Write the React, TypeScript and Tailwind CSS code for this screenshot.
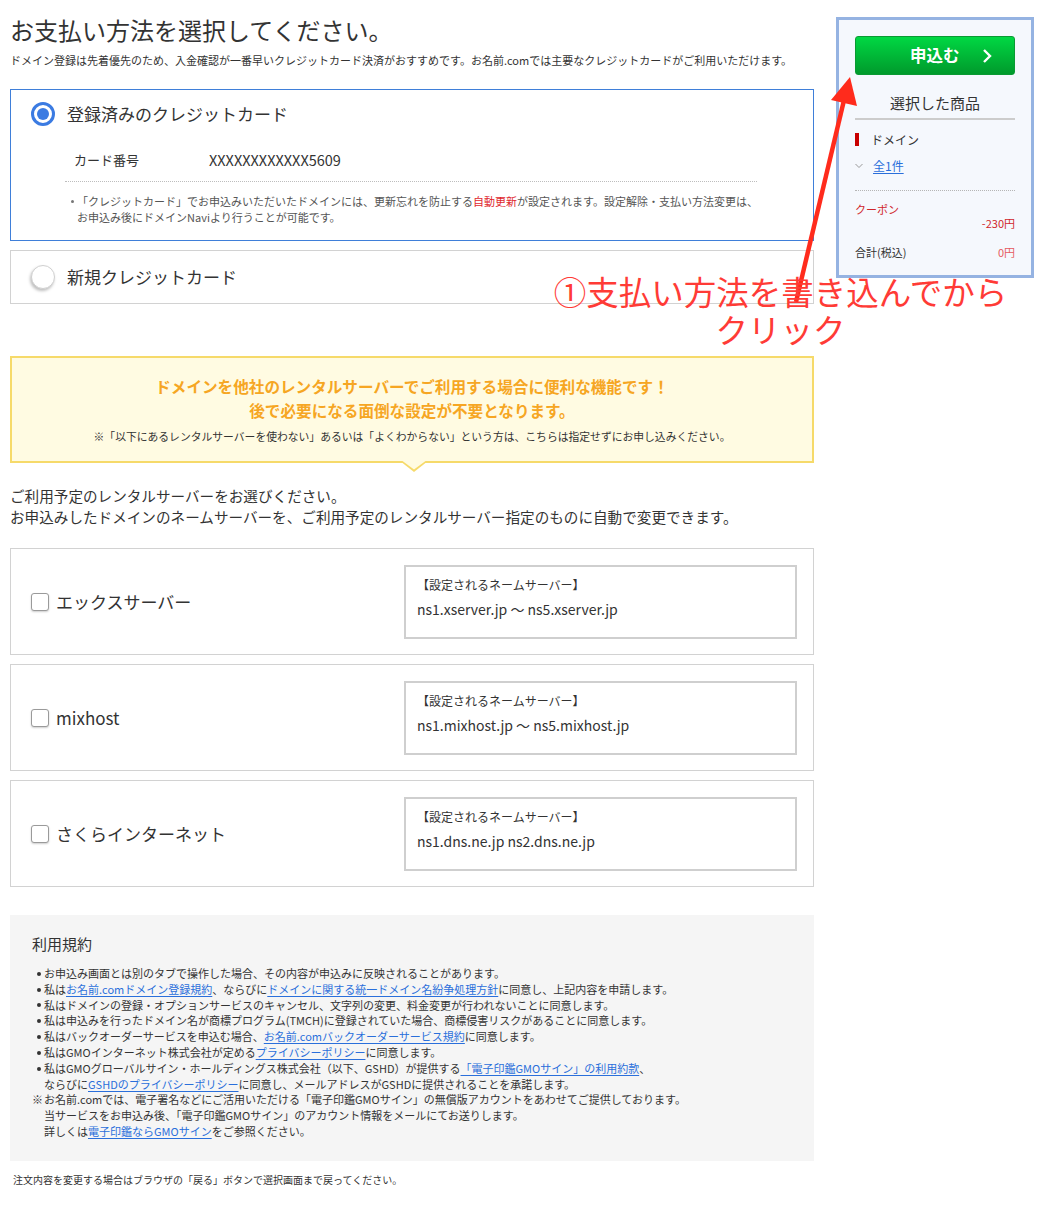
import React from 'react';

// 支払い方法選択画面
const Dot = () => (
  <span className="flex w-[7px] shrink-0 h-[15.8px] items-center">
    <span className="block w-[4px] h-[4px] rounded-full bg-[#333]" />
  </span>
);

const Link = ({ children }: { children: React.ReactNode }) => (
  <span className="text-[#2a6fdb] underline underline-offset-2">{children}</span>
);

const servers = [
  { name: 'エックスサーバー', ns: 'ns1.xserver.jp 〜 ns5.xserver.jp' },
  { name: 'mixhost', ns: 'ns1.mixhost.jp 〜 ns5.mixhost.jp' },
  { name: 'さくらインターネット', ns: 'ns1.dns.ne.jp ns2.dns.ne.jp' },
];

const ServerRow = ({ name, ns }: { name: string; ns: string }) => (
  <div className="flex h-[107px] items-center border border-[#d2d2d2] bg-white">
    <div className="ml-[20px] flex items-center">
      <span className="block w-[18px] h-[18px] rounded-[3px] border border-[#9a9a9a] bg-white shadow-[0_1px_2px_rgba(0,0,0,0.2)]" />
      <span className="ml-[7px] text-[17px] leading-[20px] text-[#333]">{name}</span>
    </div>
    <div className="ml-auto mr-[16px] w-[393px] h-[74px] border-2 border-[#cfcfcf] pl-[11px] pt-[10px]">
      <div className="text-[12px] leading-[16px] text-[#333]">【設定されるネームサーバー】</div>
      <div className="mt-[7px] text-[14px] leading-[18px] text-[#333]">{ns}</div>
    </div>
  </div>
);

const terms: React.ReactNode[] = [
  <>お申込み画面とは別のタブで操作した場合、その内容が申込みに反映されることがあります。</>,
  <>私は<Link>お名前.comドメイン登録規約</Link>、ならびに<Link>ドメインに関する統一ドメイン名紛争処理方針</Link>に同意し、上記内容を申請します。</>,
  <>私はドメインの登録・オプションサービスのキャンセル、文字列の変更、料金変更が行われないことに同意します。</>,
  <>私は申込みを行ったドメイン名が商標プログラム(TMCH)に登録されていた場合、商標侵害リスクがあることに同意します。</>,
  <>私はバックオーダーサービスを申込む場合、<Link>お名前.comバックオーダーサービス規約</Link>に同意します。</>,
  <>私はGMOインターネット株式会社が定める<Link>プライバシーポリシー</Link>に同意します。</>,
  <>私はGMOグローバルサイン・ホールディングス株式会社（以下、GSHD）が提供する<Link>「電子印鑑GMOサイン」の利用約款</Link>、<br />ならびに<Link>GSHDのプライバシーポリシー</Link>に同意し、メールアドレスがGSHDに提供されることを承諾します。</>,
];

export default function App() {
  return (
    <div className="relative w-[1044px] min-h-[1206px] bg-white text-[#333] font-['Noto_Sans_CJK_JP','Noto_Sans',sans-serif]">
      <div className="flex">
        <main className="ml-[10px] w-[804px]">
          <h1 className="mt-[18px] text-[24px] leading-[24px] font-normal text-[#333]">お支払い方法を選択してください。</h1>
          <p className="mt-[12px] text-[11px] leading-[12px] whitespace-nowrap">
            ドメイン登録は先着優先のため、入金確認が一番早いクレジットカード決済がおすすめです。お名前.comでは主要なクレジットカードがご利用いただけます。
          </p>

          {/* 登録済みカード */}
          <div className="mt-[23px] border border-[#3f7fd9] pt-[12px] pb-[15px]">
            <div className="flex h-[24px] items-center pl-[20px]">
              <span className="flex w-[24px] h-[24px] items-center justify-center rounded-full border-[3px] border-[#3b7be2] bg-white">
                <span className="block w-[12px] h-[12px] rounded-full bg-[#3b7be2]" />
              </span>
              <span className="ml-[12px] text-[17px] leading-[20px]">登録済みのクレジットカード</span>
            </div>
            <div className="mt-[24px] flex h-[20px] items-center pl-[63px]">
              <span className="w-[135px] text-[13px]">カード番号</span>
              <span className="text-[14.5px]">XXXXXXXXXXXX5609</span>
            </div>
            <div className="mt-[11px] ml-[54px] w-[692px] border-t border-dotted border-[#bdbdbd]" />
            <div className="mt-[11px] ml-[60px] flex text-[11px] leading-[16px] text-[#555] whitespace-nowrap">
              <span className="flex w-[6px] h-[16px] items-center">
                <span className="block w-[3px] h-[3px] rounded-full bg-[#777]" />
              </span>
              <span>
                「クレジットカード」でお申込みいただいたドメインには、更新忘れを防止する<span className="text-[#e0282e]">自動更新</span>が設定されます。設定解除・支払い方法変更は、
                <br />
                お申込み後にドメインNaviより行うことが可能です。
              </span>
            </div>
          </div>

          {/* 新規カード */}
          <div className="mt-[9px] flex h-[54px] items-center border border-[#d2d2d2] pl-[20px]">
            <span className="block w-[24px] h-[24px] rounded-full border border-[#d0d0d0] bg-white shadow-[-1px_2px_3px_rgba(0,0,0,0.25)]" />
            <span className="ml-[12px] text-[17px] leading-[20px]">新規クレジットカード</span>
          </div>

          {/* レンタルサーバー案内 */}
          <div className="relative mt-[52px] h-[107px] border-2 border-[#f6da6a] bg-[#fffbe2] pt-[16px] text-center">
            <div className="text-[15.6px] leading-[24px] font-bold text-[#f6a623]">ドメインを他社のレンタルサーバーでご利用する場合に便利な機能です！</div>
            <div className="text-[15.6px] leading-[24px] font-bold text-[#f6a623]">後で必要になる面倒な設定が不要となります。</div>
            <div className="mt-[6px] text-[10.8px] leading-[16px] text-[#333]">※「以下にあるレンタルサーバーを使わない」あるいは「よくわからない」という方は、こちらは指定せずにお申し込みください。</div>
            <svg className="absolute left-[388px] bottom-[-12px]" width="28" height="12" viewBox="0 0 28 12">
              <polygon points="0,0 28,0 14,11" fill="#f6da6a" />
              <polygon points="2.5,0 25.5,0 14,8.5" fill="#fffbe2" />
            </svg>
          </div>

          <div className="mt-[22px] text-[14.6px] leading-[21px] whitespace-nowrap">
            <p>ご利用予定のレンタルサーバーをお選びください。</p>
            <p>お申込みしたドメインのネームサーバーを、ご利用予定のレンタルサーバー指定のものに自動で変更できます。</p>
          </div>

          <div className="mt-[21px] flex flex-col gap-[9px]">
            {servers.map((s) => (
              <ServerRow key={s.name} name={s.name} ns={s.ns} />
            ))}
          </div>

          {/* 利用規約 */}
          <div className="mt-[28px] h-[246px] bg-[#f5f5f5] pl-[22px] pt-[19px]">
            <h2 className="text-[15px] leading-[20px] font-normal">利用規約</h2>
            <div className="mt-[12px] text-[11px] leading-[15.8px] whitespace-nowrap">
              {terms.map((t, i) => (
                <div key={i} className="ml-[5px] flex">
                  <Dot />
                  <div>{t}</div>
                </div>
              ))}
              <div className="flex">
                <span className="w-[12px] shrink-0">※</span>
                <div>
                  お名前.comでは、電子署名などにご活用いただける「電子印鑑GMOサイン」の無償版アカウントをあわせてご提供しております。
                  <br />
                  当サービスをお申込み後、「電子印鑑GMOサイン」のアカウント情報をメールにてお送りします。
                  <br />
                  詳しくは<Link>電子印鑑ならGMOサイン</Link>をご参照ください。
                </div>
              </div>
            </div>
          </div>

          <p className="mt-[12px] ml-[3px] text-[10px] leading-[14px] pb-[20px]">注文内容を変更する場合はブラウザの「戻る」ボタンで選択画面まで戻ってください。</p>
        </main>

        {/* サイドバー */}
        <aside className="ml-[22px] mt-[17px] w-[198px] h-[261px] border-[3px] border-[#95b3e2] bg-[#f5f8fd] px-[16px] pt-[16px]">
          <div className="flex h-[39px] items-center rounded-[3px] border border-[#0a9a33] bg-gradient-to-b from-[#00d843] to-[#009a2c] pl-[54px] text-white">
            <span className="text-[16.5px] font-bold">申込む</span>
            <svg className="ml-[22px]" width="10" height="16" viewBox="0 0 10 16">
              <polyline points="2,2 8,8 2,14" fill="none" stroke="#fff" strokeWidth="2.4" />
            </svg>
          </div>
          <div className="mt-[18px] text-center text-[15px] leading-[20px]">選択した商品</div>
          <div className="mt-[5px] h-[1.5px] bg-[#cccccc]" />
          <div className="mt-[13px] flex h-[14px] items-center">
            <span className="block w-[4px] h-[13px] bg-[#c80000]" />
            <span className="ml-[12px] text-[12px]">ドメイン</span>
          </div>
          <div className="mt-[12px] flex h-[14px] items-center">
            <svg width="8" height="6" viewBox="0 0 8 6">
              <polyline points="0.5,1 4,4.5 7.5,1" fill="none" stroke="#999" strokeWidth="1" />
            </svg>
            <span className="ml-[10px] text-[12px] text-[#2a6fdb] underline underline-offset-2">全1件</span>
          </div>
          <div className="mt-[17px] border-t border-dotted border-[#b5b5b5]" />
          <div className="mt-[11px] text-[11px] leading-[14px] text-[#d0262b]">クーポン</div>
          <div className="text-right text-[11px] leading-[14px] text-[#d0262b]">-230円</div>
          <div className="mt-[15px] flex justify-between text-[11px] leading-[14px]">
            <span>合計(税込)</span>
            <span className="text-[#e65a5f]">0円</span>
          </div>
        </aside>
      </div>

      {/* 注釈 */}
      <svg className="pointer-events-none absolute left-0 top-0" width="1044" height="1206">
        <line x1="796" y1="302" x2="845" y2="96" stroke="#ff2b1c" strokeWidth="4.5" />
        <polygon points="850,77 831,100 857,106" fill="#ff2b1c" />
      </svg>
      <div className="pointer-events-none absolute left-[528px] top-[272px] w-[505px] text-center text-[32.5px] leading-[38px] text-[#ff3b36]">
        <div>①支払い方法を書き込んでから</div>
        <div>クリック</div>
      </div>
    </div>
  );
}
